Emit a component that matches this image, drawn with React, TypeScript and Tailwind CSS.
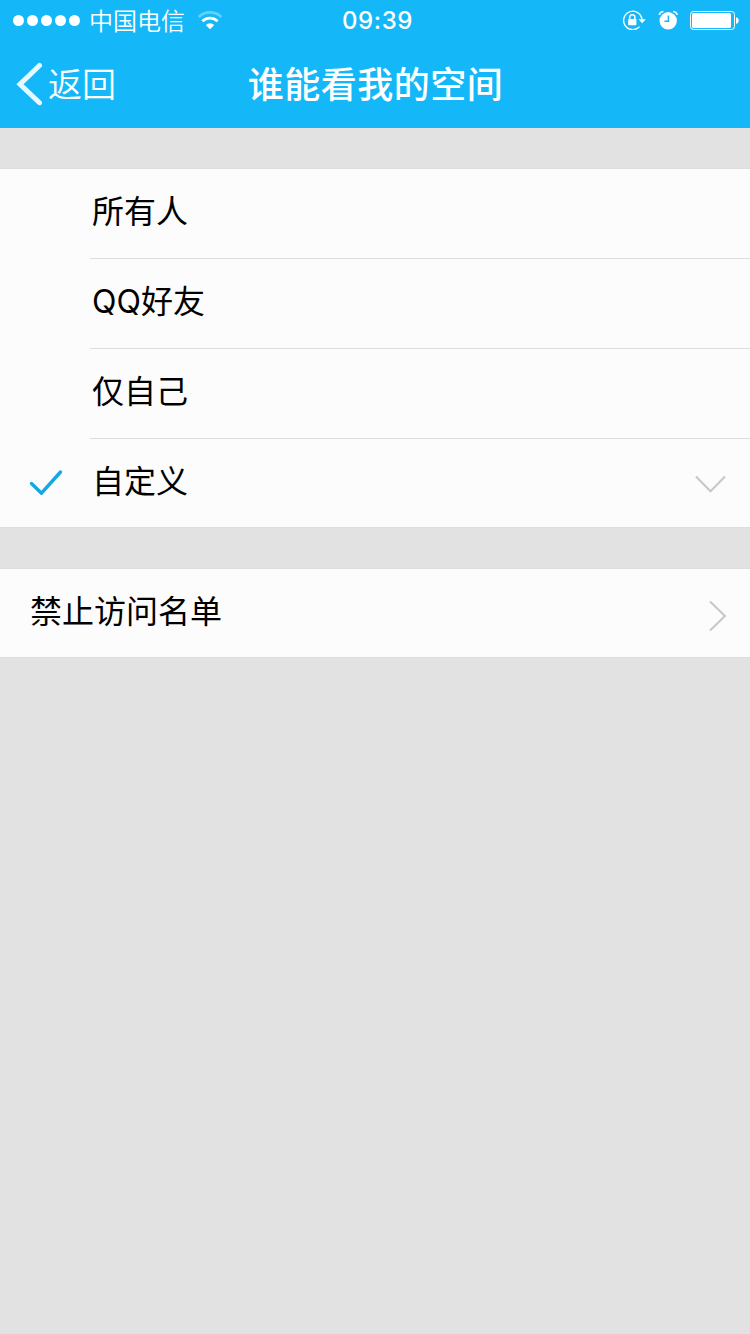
import type { ReactNode } from 'react'

interface OptionRowProps {
  label: string
  selected?: boolean
  last?: boolean
}

const options = ['所有人', 'QQ好友', '仅自己', '自定义']

function StatusBar() {
  return (
    <div className="grid h-10 grid-cols-3 text-white">
      <div className="flex items-center pl-[13px]">
        <div className="mb-0.5 flex gap-[3px]">
          {[0, 1, 2, 3, 4].map((dot) => (
            <span key={dot} className="size-[11px] rounded-full bg-white" />
          ))}
        </div>
        <span className="ml-[9px] pt-0.5 text-2xl font-[350] leading-10">中国电信</span>
        <svg className="ml-3 h-5 w-[26px]" viewBox="0 0 26 20" fill="none" stroke="white">
          <path d="M1.8 6a16 16 0 0 1 22.4 0" strokeWidth="2.7" opacity=".35" />
          <path d="M5.4 10.2a11 11 0 0 1 15.2 0" strokeWidth="2.7" />
          <path d="M13 18.2l-4.2-4.2a6.2 6.2 0 0 1 8.4 0z" fill="white" stroke="none" />
        </svg>
      </div>

      <div className="pl-[5px] text-center text-2xl font-medium leading-[41px] tracking-[0.6px]">09:39</div>

      <div className="flex items-center justify-end pr-[11px] pb-0.5">
        <svg className="h-5 w-6" viewBox="0 0 24 20" fill="none">
          <path d="M17.6 16.6A9.2 9.2 0 1 1 20 10.2" stroke="white" strokeWidth="1.4" />
          <path d="M16.6 9.2h7.2l-3.6 4z" fill="white" />
          <rect x="6.2" y="9" width="8.2" height="6.2" rx=".6" fill="white" />
          <path d="M7.7 9.5V7.3a2.6 2.6 0 0 1 5.2 0v2.2" stroke="white" strokeWidth="1.5" />
        </svg>
        <svg className="ml-3 h-5 w-5" viewBox="0 0 20 20" fill="none">
          <circle cx="10.2" cy="10.8" r="8.7" fill="white" />
          <path d="M10.4 5.6v5.7h-4" stroke="#14b8f8" strokeWidth="1.5" />
          <path d="M1.3 4.9Q1.8 1.9 5.4 1.5M15.2 1.5Q18.6 1.9 19.2 4.9" stroke="white" strokeWidth="1.6" />
        </svg>
        <svg className="ml-[11px] h-5 w-[50px]" viewBox="0 0 50 20" fill="none">
          <rect x="1.5" y="1.5" width="44" height="18" rx="3" stroke="white" strokeWidth="1" />
          <rect x="3" y="3" width="39" height="15" rx="1.5" fill="white" />
          <path d="M47 7.2q2.7.5 2.7 3.3t-2.7 3.3z" fill="white" />
        </svg>
      </div>
    </div>
  )
}

function NavBar() {
  return (
    <div className="grid h-[88px] grid-cols-[1fr_auto_1fr] items-center text-white">
      <button className="flex items-center pl-4 text-left">
        <svg className="h-11 w-7" viewBox="0 0 28 44" fill="none">
          <path d="M23.5 3.5L4 22.3l19.5 18.4" stroke="#e8f8ff" strokeWidth="5" strokeLinecap="round" />
        </svg>
        <span className="ml-1 pt-0.5 text-[34px] font-[350] leading-[84px]">返回</span>
      </button>
      <h1 className="pl-px pt-0.5 text-4xl font-medium leading-[84px] tracking-[0.5px]">谁能看我的空间</h1>
    </div>
  )
}

function Group({ children }: { children: ReactNode }) {
  return <section className="mt-10 border-y border-[#dddddd] bg-[#fcfcfc]">{children}</section>
}

function OptionRow({ label, selected, last }: OptionRowProps) {
  return (
    <button className="flex w-full text-left">
      <span className="flex w-[90px] items-center pl-[29px]">
        {selected && (
          <svg className="h-[28px] w-[34px]" viewBox="0 0 34 28" fill="none">
            <path d="M2.5 14.5l10 9.7L31.5 3" stroke="#14a7e3" strokeWidth="3.4" strokeLinecap="round" strokeLinejoin="round" />
          </svg>
        )}
      </span>
      <span
        className={`flex flex-1 items-center justify-between pl-0.5 pr-6 ${
          last ? 'h-[88px]' : 'h-[90px] border-b border-[#dddddd]'
        }`}
      >
        <span className={`leading-[84px] ${last ? 'pb-0.5' : 'pb-1'}`}>{label}</span>
        {selected && (
          <svg className="mt-0.5 h-5 w-8" viewBox="0 0 32 20" fill="none">
            <path d="M2 2.5l14.5 14.8L31 2.5" stroke="#c7c7c7" strokeWidth="2" />
          </svg>
        )}
      </span>
    </button>
  )
}

export default function App() {
  return (
    <div className="min-h-screen bg-[#e2e2e2] font-['Inter','Noto_Sans_CJK_SC',sans-serif]">
      <header className="bg-[#14b8f8]">
        <StatusBar />
        <NavBar />
      </header>

      <main className="text-[32px] text-black">
        <Group>
          {options.map((label, index) => (
            <OptionRow
              key={label}
              label={label}
              selected={label === '自定义'}
              last={index === options.length - 1}
            />
          ))}
        </Group>

        <Group>
          <button className="flex h-[88px] w-full items-center justify-between pl-[30px] pr-[22px] text-left">
            <span className="pb-0.5 leading-[84px]">禁止访问名单</span>
            <svg className="mt-1.5 h-8 w-5" viewBox="0 0 20 32" fill="none">
              <path d="M2 1.5l15 14.5L2 30.5" stroke="#c7c7c7" strokeWidth="2" />
            </svg>
          </button>
        </Group>
      </main>
    </div>
  )
}
